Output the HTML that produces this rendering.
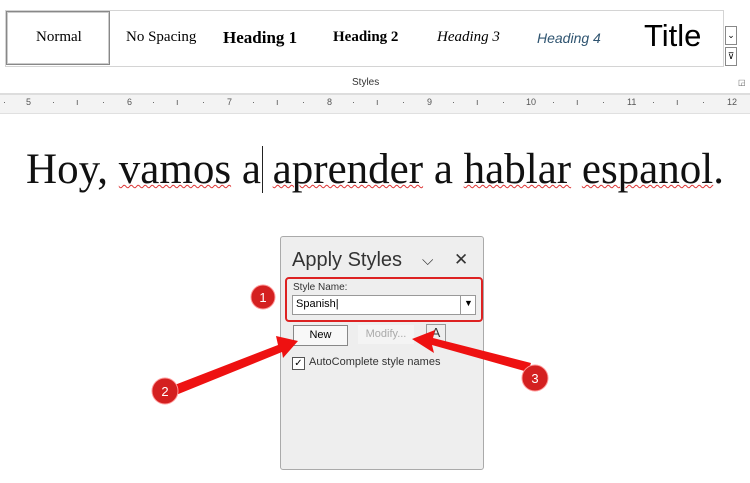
<html><head><style>
body{margin:0;width:750px;height:483px;background:#fff;position:relative;overflow:hidden;font-family:"Liberation Sans",sans-serif}
.a{position:absolute}
.g{font-size:15px;top:29px;white-space:nowrap}
u{text-decoration:underline wavy #d33 1px}
</style></head><body>
<div class="a" style="left:0;top:0;width:750px;height:93px;background:#fff;border-bottom:2px solid #ddd"></div>
<div class="a" style="left:5px;top:10px;width:717px;height:55px;border:1px solid #d4d4d4;background:#fff"></div>
<div class="a" style="left:6px;top:11px;width:102px;height:52px;border:1px solid #888;box-shadow:inset 0 0 0 1px #ccc"></div>
<div class="a g" style="left:36px;font-family:'Liberation Serif',serif">Normal</div>
<div class="a g" style="left:126px;font-family:'Liberation Serif',serif">No Spacing</div>
<div class="a g" style="left:223px;font-family:'Liberation Serif',serif;font-weight:bold;font-size:17px;top:28px">Heading 1</div>
<div class="a g" style="left:333px;font-family:'Liberation Serif',serif;font-weight:bold">Heading 2</div>
<div class="a g" style="left:437px;font-family:'Liberation Serif',serif;font-style:italic">Heading 3</div>
<div class="a g" style="left:537px;font-style:italic;color:#2f5470;font-size:14px;top:30px">Heading 4</div>
<div class="a" style="left:644px;top:18px;font-size:31px">Title</div>
<div class="a" style="left:725px;top:26px;width:10px;height:17px;border:1px solid #888;font-size:9px;text-align:center;line-height:17px">⌄</div>
<div class="a" style="left:725px;top:47px;width:10px;height:17px;border:1px solid #888;font-size:9px;text-align:center;line-height:17px">⊽</div>
<div class="a" style="left:352px;top:77px;font-size:10px;color:#333">Styles</div>
<div class="a" style="left:738px;top:78px;font-size:8px;color:#666">◲</div>
<div class="a" style="left:0;top:95px;width:750px;height:18px;background:#f3f3f3;border-bottom:1px solid #e0e0e0"></div>
<div class="a" style="top:97px;left:0;width:750px;font-size:9px;color:#555">
<span class="a" style="left:26px">5</span><span class="a" style="left:127px">6</span><span class="a" style="left:227px">7</span><span class="a" style="left:327px">8</span><span class="a" style="left:427px">9</span><span class="a" style="left:526px">10</span><span class="a" style="left:627px">11</span><span class="a" style="left:727px">12</span>
<span class="a" style="left:3px">·</span><span class="a" style="left:52px">·</span><span class="a" style="left:76px">ı</span><span class="a" style="left:102px">·</span><span class="a" style="left:152px">·</span><span class="a" style="left:176px">ı</span><span class="a" style="left:202px">·</span><span class="a" style="left:252px">·</span><span class="a" style="left:276px">ı</span><span class="a" style="left:302px">·</span><span class="a" style="left:352px">·</span><span class="a" style="left:376px">ı</span><span class="a" style="left:402px">·</span><span class="a" style="left:452px">·</span><span class="a" style="left:476px">ı</span><span class="a" style="left:502px">·</span><span class="a" style="left:552px">·</span><span class="a" style="left:576px">ı</span><span class="a" style="left:602px">·</span><span class="a" style="left:652px">·</span><span class="a" style="left:676px">ı</span><span class="a" style="left:702px">·</span>
</div>
<div class="a" style="left:0;top:145px;width:750px;text-align:center;font-family:'Liberation Serif',serif;font-size:43px;color:#111">Hoy, <u>vamos</u> a<span style="border-left:1px solid #222;margin-left:1px;margin-right:-1px"></span> <u>aprender</u> a <u>hablar</u> <u>espanol</u>.</div>
<div class="a" style="left:280px;top:236px;width:202px;height:232px;background:#eeeeee;border:1px solid #aaa;border-radius:3px"></div>
<div class="a" style="left:292px;top:249px;font-size:20px;color:#333">Apply Styles</div>
<div class="a" style="left:422px;top:252px;font-size:15px;color:#333">⌵</div>
<div class="a" style="left:454px;top:250px;font-size:17px;color:#333">✕</div>
<div class="a" style="left:285px;top:277px;width:194px;height:41px;border:2px solid #d22;border-radius:4px"></div>
<div class="a" style="left:293px;top:282px;font-size:10px;color:#333">Style Name:</div>
<div class="a" style="left:292px;top:295px;width:182px;height:18px;background:#fff;border:1px solid #999"></div>
<div class="a" style="left:296px;top:298px;font-size:11px">Spanish|</div>
<div class="a" style="left:460px;top:295px;width:1px;height:19px;background:#999"></div>
<div class="a" style="left:464px;top:298px;font-size:9px">▼</div>
<div class="a" style="left:293px;top:325px;width:53px;height:19px;border:1px solid #888;background:#f8f8f8;font-size:11px;text-align:center;line-height:19px">New</div>
<div class="a" style="left:358px;top:325px;width:56px;height:19px;background:#f4f4f4;font-size:11px;color:#aaa;text-align:center;line-height:19px">Modify...</div>
<div class="a" style="left:426px;top:324px;width:18px;height:18px;border:1px solid #999;font-size:13px;text-align:center;color:#333">A</div>
<div class="a" style="left:292px;top:357px;width:11px;height:11px;border:1px solid #555;background:#fff;font-size:10px;line-height:11px;text-align:center">✓</div>
<div class="a" style="left:309px;top:356px;font-size:11px;color:#333">AutoComplete style names</div>
<svg class="a" style="left:0;top:0" width="750" height="483">
<polygon points="172,386 278,345 276,336 298,341 283,358 282,352 176,395" fill="#e11"/>
<polygon points="528,372 432,345 434,353 412,339 435,330 433,338 531,363" fill="#e11"/>
<circle cx="263" cy="297" r="12" fill="#d42020" stroke="#f99" stroke-width="1"/>
<circle cx="165" cy="391" r="13" fill="#d42020" stroke="#f99" stroke-width="1"/>
<circle cx="535" cy="378" r="13" fill="#d42020" stroke="#f99" stroke-width="1"/>
<text x="263" y="302" font-size="13" fill="#fff" text-anchor="middle" font-family="Liberation Sans">1</text>
<text x="165" y="396" font-size="13" fill="#fff" text-anchor="middle" font-family="Liberation Sans">2</text>
<text x="535" y="383" font-size="13" fill="#fff" text-anchor="middle" font-family="Liberation Sans">3</text>
</svg>
</body></html>
